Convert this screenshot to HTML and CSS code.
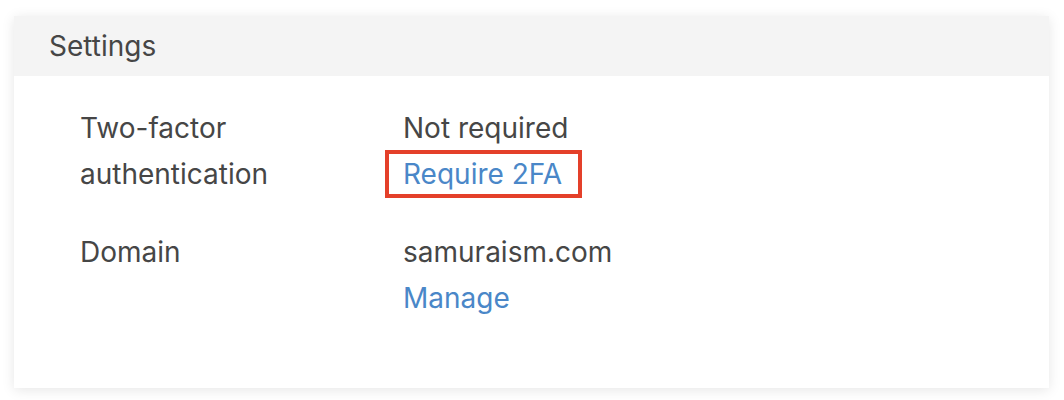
FILE: index.html
```html
<!DOCTYPE html>
<html>
<head>
<meta charset="utf-8">
<link rel="stylesheet" href="styles.css">
</head>
<body>
<section class="card">
  <header class="card-header">Settings</header>
  <div class="card-body">
    <div class="row">
      <div class="label">Two-factor<br>authentication</div>
      <div class="value">
        <div>Not required</div>
        <a class="link highlighted" href="#">Require 2FA</a>
      </div>
    </div>
    <div class="row">
      <div class="label">Domain</div>
      <div class="value">
        <div>samuraism.com</div>
        <a class="link" href="#">Manage</a>
      </div>
    </div>
  </div>
</section>
</body>
</html>
```

FILE: styles.css
```css
html, body {
  margin: 0;
  background: #ffffff;
}
body {
  padding: 16px 15px 12px 14px;
  font-family: Inter, "Noto Sans", sans-serif;
  color: #464646;
}
.card {
  background: #fff;
  box-shadow: 0 2px 12px rgba(0, 0, 0, 0.1);
}
.card-header {
  background: #f4f4f4;
  height: 60px;
  line-height: 60px;
  padding-left: 35px;
  font-size: 28px;
}
.card-body {
  padding: 29px 0 67px 66px;
  display: flex;
  flex-direction: column;
  gap: 32px;
}
.row {
  display: grid;
  grid-template-columns: 323px 1fr;
  font-size: 28px;
  line-height: 46px;
}
.value {
  display: flex;
  flex-direction: column;
  align-items: flex-start;
}
.link {
  color: #4a87c8;
  text-decoration: none;
  position: relative;
}
.highlighted::after {
  content: "";
  position: absolute;
  left: -18px;
  right: -20px;
  top: -1px;
  bottom: -1px;
  border: 4px solid #e4402a;
}
```
